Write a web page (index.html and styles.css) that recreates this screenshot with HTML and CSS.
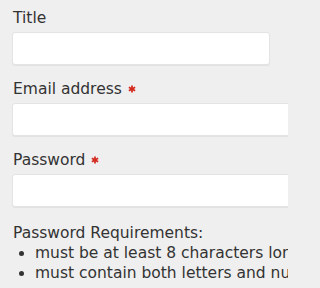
FILE: index.html
```html
<!DOCTYPE html>
<html lang="en">
<head>
<meta charset="utf-8">
<title>Form</title>
<link rel="stylesheet" href="styles.css">
</head>
<body>
<form class="form">
  <div class="field">
    <label class="label" for="title">Title</label>
    <input class="input input-short" id="title" type="text">
  </div>
  <div class="field">
    <label class="label" for="email">Email address <svg class="req" viewBox="0 0 10 10" aria-hidden="true"><g stroke="currentColor" stroke-width="2.2" stroke-linecap="butt"><line x1="5" y1="0.5" x2="5" y2="9.5"/><line x1="1.1" y1="2.75" x2="8.9" y2="7.25"/><line x1="1.1" y1="7.25" x2="8.9" y2="2.75"/></g></svg></label>
    <input class="input input-wide" id="email" type="email">
  </div>
  <div class="field">
    <label class="label" for="password">Password <svg class="req" viewBox="0 0 10 10" aria-hidden="true"><g stroke="currentColor" stroke-width="2.2" stroke-linecap="butt"><line x1="5" y1="0.5" x2="5" y2="9.5"/><line x1="1.1" y1="2.75" x2="8.9" y2="7.25"/><line x1="1.1" y1="7.25" x2="8.9" y2="2.75"/></g></svg></label>
    <input class="input input-wide" id="password" type="password">
  </div>
  <div class="reqs">
    <p class="reqs-title">Password Requirements:</p>
    <ul class="reqs-list">
      <li>must be at least 8 characters long</li>
      <li>must contain both letters and numbers</li>
    </ul>
  </div>
</form>
</body>
</html>
```
FILE: styles.css
```css
html {
  overflow: hidden;
  background: #efefef;
}
body {
  margin: 0;
  width: 288px;
  height: 288px;
  overflow: hidden;
  background: #efefef;
  font-family: "DejaVu Sans", sans-serif;
  color: #333333;
}
.form {
  padding: 8px 0 0 13px;
  display: flex;
  flex-direction: column;
  overflow: hidden;
}
.field {
  display: flex;
  flex-direction: column;
  align-items: flex-start;
  margin-bottom: 14px;
}
.label {
  font-size: 15.5px;
  line-height: 20px;
  margin-bottom: 4px;
  display: flex;
  align-items: center;
  gap: 6px;
}
.req {
  width: 8px;
  height: 8px;
  color: #d42a1e;
}
.input {
  box-sizing: border-box;
  flex: none;
  height: 33px;
  margin: 0 0 0 -1px;
  background: #ffffff;
  border: 1px solid #e4e4e4;
  border-radius: 3px;
  box-shadow: 0 1px 1px rgba(0,0,0,0.06);
  padding: 0 8px;
  font: inherit;
}
.input-short { width: 258px; }
.input-wide { width: 300px; }
.reqs {
  font-size: 15.5px;
  line-height: 20px;
  margin-top: 2px;
}
.reqs-title {
  margin: 0;
}
.reqs-list {
  margin: 0;
  padding-left: 22px;
  white-space: nowrap;
}
```
